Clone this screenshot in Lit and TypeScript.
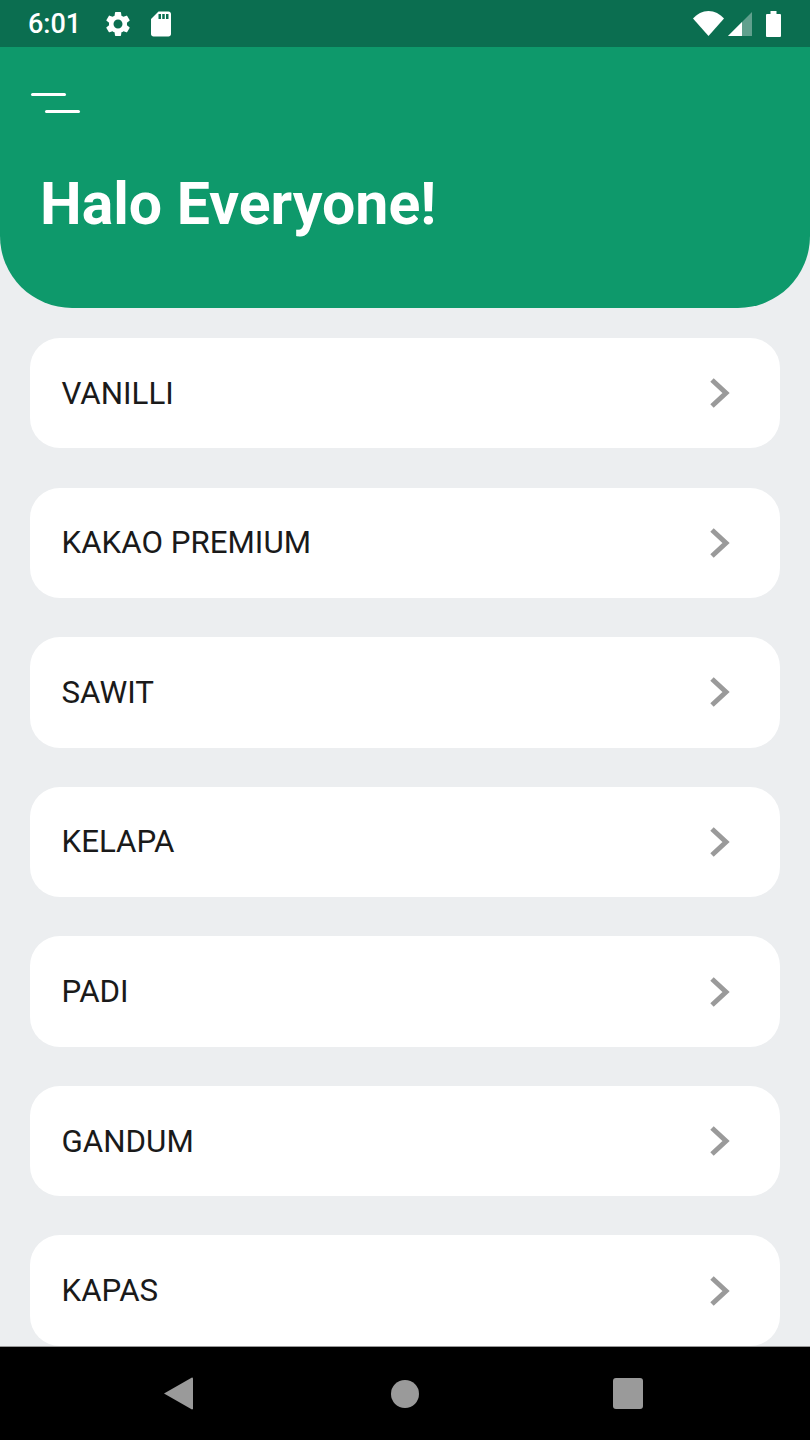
import { LitElement, html, css } from "lit";
import { customElement } from "lit/decorators.js";

const ITEMS = ["VANILLI", "KAKAO PREMIUM", "SAWIT", "KELAPA", "PADI", "GANDUM", "KAPAS"];

@customElement("app-root")
export class AppRoot extends LitElement {
  static styles = css`
    :host { display: block; font-family: Roboto, "Liberation Sans", sans-serif; }
    .screen { height: 1440px; width: 810px; display: flex; flex-direction: column; background: #eceef0; overflow: hidden; }
    .status { height: 47px; flex: none; background: #0b6e50; display: flex; align-items: center; color: #fff; padding: 0 29px 0 28px; box-sizing: border-box; }
    .time { font-size: 27px; font-weight: 500; width: 74px; letter-spacing: 0; }
    .status svg { display: block; fill: #fff; flex: none; }
    .gear { margin-left: 1px; }
    .sd { margin-left: 13px; }
    .spacer { flex: 1; }
    .signal { margin-left: 4px; }
    .battery { margin-left: 14px; }
    .header { height: 261px; flex: none; box-sizing: border-box; background: #0e996b; border-radius: 0 0 72px 72px; padding: 46px 0 0 31px; color: #fff; }
    .menu { display: flex; flex-direction: column; gap: 14px; width: 49px; }
    .menu i { display: block; height: 3px; background: #fff; border-radius: 2px; }
    .menu i:first-child { width: 35px; }
    .menu i:last-child { width: 35px; margin-left: 14px; }
    h1 { margin: 58px 0 0 9px; font-size: 59px; line-height: 66px; font-weight: 700; letter-spacing: 0; }
    .list { flex: 1; min-height: 0; overflow: hidden; display: flex; flex-direction: column; gap: 39.2px; padding: 30px 30px 0; }
    .card { flex: none; height: 110.4px; background: #fff; border-radius: 30px; display: flex; align-items: center; justify-content: space-between; padding: 0 50.500px 0 31.500px; }
    .label { font-size: 31.3px; color: #1a1a1a; }
    .chev { display: block; fill: none; stroke: #9a9a9a; stroke-width: 5; }
    .nav { height: 94px; flex: none; background: #000; display: flex; align-items: center; border-top: 1px solid #999; box-sizing: border-box; padding: 0 0 0 164px; }
    .nav svg { display: block; fill: #9a9a9a; flex: none; }
    .home { margin-left: 198px; }
    .recent { margin-left: 194px; }
  `;

  render() {
    return html`
      <div class="screen">
        <div class="status">
          <span class="time">6:01</span>
          <svg class="gear" width="30" height="30" viewBox="0 0 24 24"><path d="M19.14 12.94c.04-.3.06-.61.06-.94 0-.32-.02-.64-.07-.94l2.03-1.58a.49.49 0 0 0 .12-.61l-1.92-3.32a.488.488 0 0 0-.59-.22l-2.39.96c-.5-.38-1.03-.7-1.62-.94l-.36-2.54a.484.484 0 0 0-.48-.41h-3.84c-.24 0-.43.17-.47.41l-.36 2.54c-.59.24-1.13.57-1.62.94l-2.39-.96c-.22-.08-.47 0-.59.22L2.74 8.87c-.12.21-.08.47.12.61l2.03 1.58c-.05.3-.09.63-.09.94s.02.64.07.94l-2.03 1.58a.49.49 0 0 0-.12.61l1.92 3.32c.12.22.37.29.59.22l2.39-.96c.5.38 1.03.7 1.62.94l.36 2.54c.05.24.24.41.48.41h3.84c.24 0 .44-.17.47-.41l.36-2.54c.59-.24 1.13-.56 1.62-.94l2.39.96c.22.08.47 0 .59-.22l1.92-3.32c.12-.22.07-.47-.12-.61l-2.01-1.58zM12 15.6c-1.98 0-3.6-1.62-3.6-3.6s1.62-3.6 3.6-3.6 3.6 1.62 3.6 3.6-1.62 3.6-3.6 3.6z"/></svg>
          <svg class="sd" width="30" height="30" viewBox="0 0 24 24"><path d="M18 2h-8L4.02 8 4 20c0 1.1.9 2 2 2h12c1.1 0 2-.9 2-2V4c0-1.1-.9-2-2-2zm-6 6h-2V4h2v4zm3 0h-2V4h2v4zm3 0h-2V4h2v4z"/></svg>
          <span class="spacer"></span>
          <svg width="31" height="25" viewBox="0 0 31 25"><path d="M0 7.5C4 3 9.5 0 15.5 0S27 3 31 7.5L15.5 25z"/></svg>
          <svg class="signal" width="24" height="24" viewBox="0 0 24 24"><path d="M24 0v24H0z" opacity=".35"/><path d="M14 10v14H0z"/></svg>
          <svg class="battery" width="15" height="26" viewBox="0 0 15 26"><path d="M4.5 0h6v3H14a1 1 0 0 1 1 1v21a1 1 0 0 1-1 1H1a1 1 0 0 1-1-1V4a1 1 0 0 1 1-1h3.500z"/></svg>
        </div>
        <div class="header">
          <div class="menu"><i></i><i></i></div>
          <h1>Halo Everyone!</h1>
        </div>
        <div class="list">
          ${ITEMS.map(
            (t) => html`<div class="card">
              <span class="label">${t}</span>
              <svg class="chev" width="20" height="32" viewBox="0 0 20 32"><path d="M2 3l14 13L2 29"/></svg>
            </div>`
          )}
        </div>
        <div class="nav">
          <svg width="29" height="33" viewBox="0 0 29 33"><path d="M28 .5a1 1 0 0 1 1 1V32l-1 .5L0 16.500z"/></svg>
          <svg class="home" width="28" height="28" viewBox="0 0 28 28"><circle cx="14" cy="14" r="14"/></svg>
          <svg class="recent" width="30" height="31" viewBox="0 0 30 31"><rect width="30" height="31" rx="3"/></svg>
        </div>
      </div>
    `;
  }
}
